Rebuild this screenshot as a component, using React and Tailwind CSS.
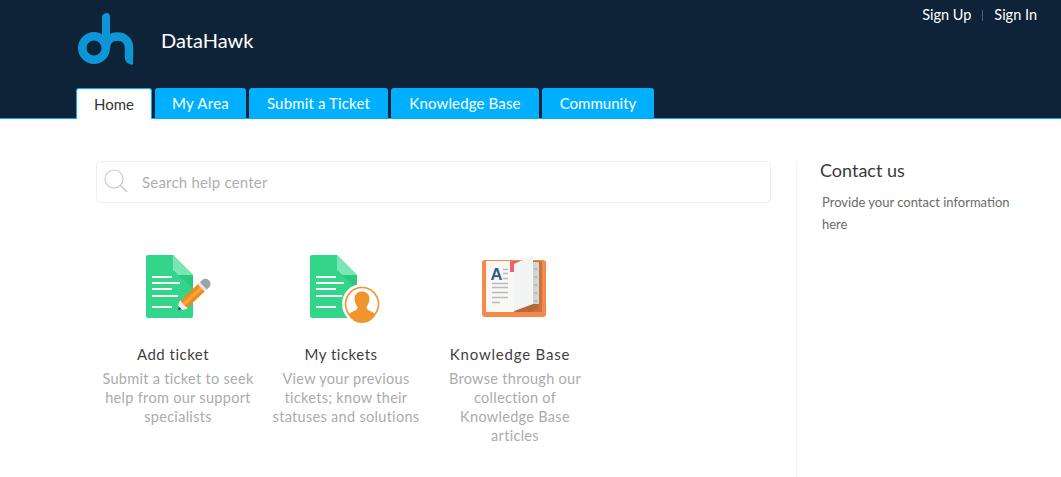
function Logo() {
  return (
    <svg width="58" height="52" viewBox="0 0 58 52" fill="none" className="block">
      <circle cx="18" cy="35" r="11.750" stroke="#0c96d6" strokeWidth="8.500" />
      <path d="M26 35 V3 C27 1 29 0 31 0 C33 0 34 1.500 34 4 V35 Z" fill="#0c96d6" />
      <path d="M30 35 C30 28 35 23.500 41.500 23.500 C48 23.500 53 28 53 35 V44 C53 46 54 47.500 57 47.500" stroke="#0c96d6" strokeWidth="8.500" fill="none" />
    </svg>
  );
}

function Doc() {
  return (
    <g>
      <path d="M2 0 H27 L47 20 V61 a2 2 0 0 1 -2 2 H2 a2 2 0 0 1 -2 -2 V2 a2 2 0 0 1 2 -2 Z" fill="#33d58a" />
      <path d="M27 0 L47 20 H32 a5 5 0 0 1 -5 -5 Z" fill="#7be6b4" />
      <path d="M27 15 a5 5 0 0 0 5 5 H47 V34 L27 15 Z" fill="#2bc97e" />
      <rect x="6" y="21" width="20" height="2" fill="#fff" />
      <rect x="6" y="27" width="28" height="2" fill="#fff" />
      <rect x="6" y="33" width="20" height="2" fill="#fff" />
      <rect x="6" y="40" width="26" height="2" fill="#fff" />
      <rect x="6" y="51" width="20" height="2" fill="#fff" />
    </g>
  );
}

function AddIcon() {
  return (
    <svg width="66" height="66" viewBox="0 0 66 66" className="block">
      <Doc />
      <g transform="translate(32 55) rotate(-43.500)">
        <path d="M0 0 L7 -5 H9 V5 H7 Z" fill="#fff" />
        <path d="M0 0 L3.500 -2.500 V2.500 Z" fill="#2c3e50" />
        <path d="M3 -3 L6.500 -5 H9 V5 H6.500 L3 3 Z" fill="#eeeeee" />
        <rect x="8" y="-5" width="24" height="10" fill="#ef8a1c" />
        <rect x="8" y="-1.600" width="24" height="3.200" fill="#f9a63a" />
        <rect x="32" y="-5" width="3" height="10" fill="#e4e4e4" />
        <path d="M35 -5 h3 a5 5 0 0 1 0 10 h-3 Z" fill="#9aa3a6" />
      </g>
    </svg>
  );
}

function TicketsIcon() {
  return (
    <svg width="72" height="70" viewBox="0 0 72 70" className="block">
      <Doc />
      <circle cx="52" cy="49" r="20" fill="#fff" />
      <circle cx="52" cy="49" r="16.500" fill="#fff" stroke="#f0952d" strokeWidth="1.600" />
      <path d="M44.500 43.500 C44.500 39 48 36.500 52 36.500 C56 36.500 59.500 39 59.500 43.500 C59.500 47 58 50 56.500 52 C56.500 54 58 55 60 56 C62.500 57 64.500 58 65.500 60 A15.500 15.500 0 0 1 38.500 60 C39.500 58 41.500 57 44 56 C46 55 47.500 54 47.500 52 C46 50 44.500 47 44.500 43.500 Z" fill="#f0952d" />
    </svg>
  );
}

function BookIcon() {
  return (
    <svg width="66" height="66" viewBox="0 0 66 66" className="block">
      <rect x="0" y="5" width="64" height="57" rx="3" fill="#f5894a" />
      <rect x="4" y="6" width="56" height="51" fill="#c9743f" />
      <rect x="4" y="6" width="28" height="51" fill="#faf8f4" />
      <path d="M32 57 L51 49 H56 V53 L50 57 Z" fill="#b5683b" />
      <path d="M44 7 H57 V49 H44 Z" fill="#cfd4d5" />
      <path d="M52 14 h3 M52 22 h3 M52 30 h3 M52 38 h3 M52 46 h3" stroke="#9ea5a8" strokeWidth="1" />
      <rect x="28" y="6" width="4" height="11" fill="#f0616d" />
      <text x="8.500" y="25" fontFamily="'Liberation Sans', sans-serif" fontWeight="700" fontSize="16.500" fill="#2f5f85">A</text>
      <path d="M21 14.500 h5 M21 18.500 h5 M21 23.500 h5 M10 28.500 h16 M10 32.500 h16 M10 37.500 h16 M10 42.500 h16 M10 47.500 h8" stroke="#b4bcbf" strokeWidth="1.400" />
      <path d="M32 9 L51 0 V49 L32 56 Z" fill="#f3f4f4" />
    </svg>
  );
}

function Card({ width, title, desc, icon, titleClass }) {
  return (
    <div className="flex flex-col items-center text-center" style={{ width }}>
      <div className="self-start ml-[50px] h-[66px]">{icon}</div>
      <div className={`text-[15px] leading-5 text-[#3f3f3f] mt-[23px] mr-[10px] ${titleClass}`}>{title}</div>
      <div className="text-[14.5px] leading-[19px] text-[#ababab] mt-[5px] tracking-[0.3px]">{desc}</div>
    </div>
  );
}

export default function App() {
  const tabs = [
    ["My Area", "w-[91px]", "tracking-[0.3px]"],
    ["Submit a Ticket", "w-[139px]", "tracking-[0.15px]"],
    ["Knowledge Base", "w-[148px]", "tracking-[0.15px]"],
    ["Community", "w-[112px]", "tracking-[0px]"],
  ];
  return (
    <div className="min-h-[477px] bg-white overflow-hidden font-['Lato','Open_Sans',sans-serif]">
      <header className="h-[119px] bg-[#0e2338] border-b border-[#00b0ff] relative flex flex-col">
        <div className="flex items-start pl-[76px] pt-[13px] h-[88px] shrink-0">
          <Logo />
          <span className="text-white text-[20px] leading-6 ml-[27px] mt-[15px]">DataHawk</span>
        </div>
        <div className="absolute right-[24px] top-[6px] flex items-center text-white text-[14.5px] leading-[18px]">
          <span>Sign Up</span>
          <span className="w-px h-[11px] bg-[#3a6a85] mx-[11px]" />
          <span>Sign In</span>
        </div>
        <nav className="flex gap-[3px] pl-[76px] h-[31px] shrink-0">
          <div className="w-[76px] h-[31px] bg-white border border-b-0 border-[#00b0ff] rounded-t-[3px] flex items-center justify-center text-[15px] text-[#333]">
            Home
          </div>
          {tabs.map(([t, w, tr]) => (
            <div key={t} className={`${w} ${tr} h-[30px] bg-[#00b0ff] rounded-t-[3px] flex items-center justify-center text-white text-[15px]`}>
              {t}
            </div>
          ))}
        </nav>
      </header>
      <main className="flex pl-[96px] pt-[42px]">
        <div className="w-[675px]">
          <div className="h-[42px] border border-[#eeeeee] rounded-[5px] flex items-center">
            <svg width="24" height="24" viewBox="0 0 24 24" fill="none" className="ml-[7px] mr-[14px] mt-[-2px]">
              <circle cx="10" cy="10" r="9" stroke="#c5cbc9" strokeWidth="1.200" />
              <path d="M16.500 16.500 L23 23" stroke="#c5cbc9" strokeWidth="1.600" />
            </svg>
            <span className="text-[15px] text-[#aeaeae] tracking-[0.2px]">Search help center</span>
          </div>
          <div className="flex mt-[52px]">
            <Card width="164px" title="Add ticket" titleClass="tracking-[0.5px]" icon={<AddIcon />}
              desc={<>Submit a ticket to seek<br />help from our support<br />specialists</>} />
            <Card width="172px" title="My tickets" titleClass="tracking-[0.5px]" icon={<TicketsIcon />}
              desc={<>View your previous<br />tickets; know their<br />statuses and solutions</>} />
            <Card width="166px" title="Knowledge Base" titleClass="tracking-[0.8px]" icon={<BookIcon />}
              desc={<>Browse through our<br />collection of<br />Knowledge Base<br />articles</>} />
          </div>
        </div>
        <aside className="ml-[25px] pl-[24px] w-[265px] h-[316px] border-l border-[#f3f3f3]">
          <h2 className="text-[18px] leading-6 text-[#3a3a3a] mt-[-3px] -ml-px">Contact us</h2>
          <p className="text-[13px] leading-[22px] text-[#6b6b6b] mt-[9px] pl-px w-[200px]">
            Provide your contact information here
          </p>
        </aside>
      </main>
    </div>
  );
}
